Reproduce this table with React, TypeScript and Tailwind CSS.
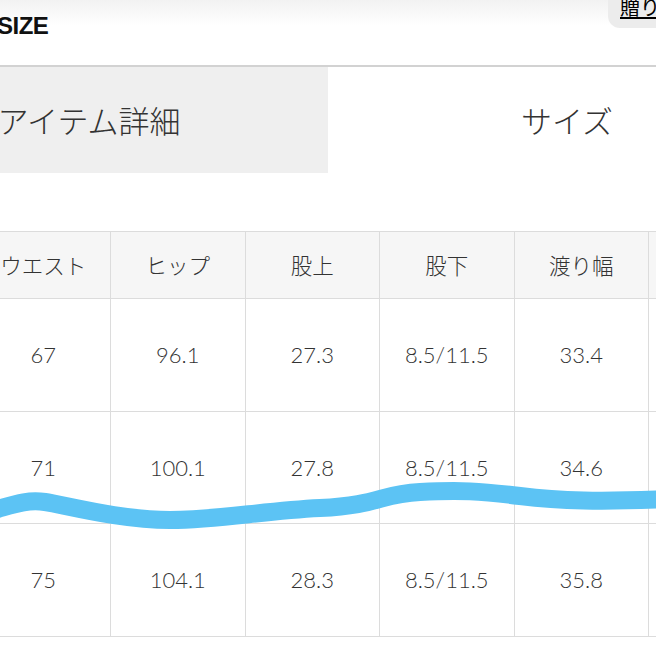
import React from "react";

const jp = "font-['Noto_Sans_CJK_JP','Noto_Sans',sans-serif]";

const headers = ["ウエスト", "ヒップ", "股上", "股下", "渡り幅", "裾幅"];
const rows = [
  ["67", "96.1", "27.3", "8.5/11.5", "33.4", "16.5"],
  ["71", "100.1", "27.8", "8.5/11.5", "34.6", "17.0"],
  ["75", "104.1", "28.3", "8.5/11.5", "35.8", "17.5"],
];

export default function App() {
  return (
    <div className="relative h-[656px] w-[656px] overflow-hidden bg-white">
      {/* top bar */}
      <div className="relative h-[65px] bg-gradient-to-b from-[#f2f2f2] to-white to-[40%]">
        <div className="absolute left-[-3px] top-[8px] font-['Liberation_Sans',sans-serif] text-[24px] font-bold tracking-[-0.5px] text-[#111]">
          SIZE
        </div>
        <div
          className={`absolute right-[-20px] top-[-6px] flex h-[34px] w-[68px] items-start rounded-bl-[12px] bg-[#ececec] pl-[12px] ${jp}`}
        >
          <span className="text-[20px] leading-[26px] text-black underline underline-offset-[2px]">
            贈り
          </span>
        </div>
      </div>

      {/* tabs */}
      <div className="border-t-2 border-[#d2d2d2]">
        <div className={`ml-[-150px] flex w-max ${jp}`}>
          <div className="flex h-[106px] w-[478px] shrink-0 items-center justify-center bg-[#efefef] text-[31px] font-light text-[#333]">
            アイテム詳細
          </div>
          <div className="flex h-[106px] w-[478px] shrink-0 items-center justify-center bg-white text-[31px] font-light text-[#333]">
            サイズ
          </div>
        </div>
      </div>

      {/* table */}
      <div className="ml-[-23.5px] mt-[58px] grid w-max grid-cols-[repeat(6,134.5px)] border-t border-[#dcdcdc]">
        {headers.map((h) => (
          <div
            key={h}
            className={`flex h-[67px] items-center justify-center border-b border-r border-[#dcdcdc] bg-[#f6f6f6] text-[21.5px] font-light text-[#333] ${jp}`}
          >
            {h}
          </div>
        ))}
        {rows.map((r, i) =>
          r.map((v, j) => (
            <div
              key={`${i}-${j}`}
              className="flex h-[112.5px] items-center justify-center border-b border-r border-[#dcdcdc] font-['Lato',sans-serif] text-[22px] font-light text-[#333]"
            >
              {v}
            </div>
          ))
        )}
      </div>

      {/* hand-drawn marker stroke */}
      <svg
        className="pointer-events-none absolute left-0 top-0"
        width="656"
        height="656"
        viewBox="0 0 656 656"
      >
        <path
          d="M -10 511 C 10 506, 25 499, 45 502 S 120 520, 170 520 S 260 511, 320 508 S 380 494, 420 492 S 480 491, 520 496 S 600 502, 670 499"
          fill="none"
          stroke="#5cc3f4"
          strokeWidth="18"
          strokeLinecap="round"
        />
      </svg>
    </div>
  );
}
